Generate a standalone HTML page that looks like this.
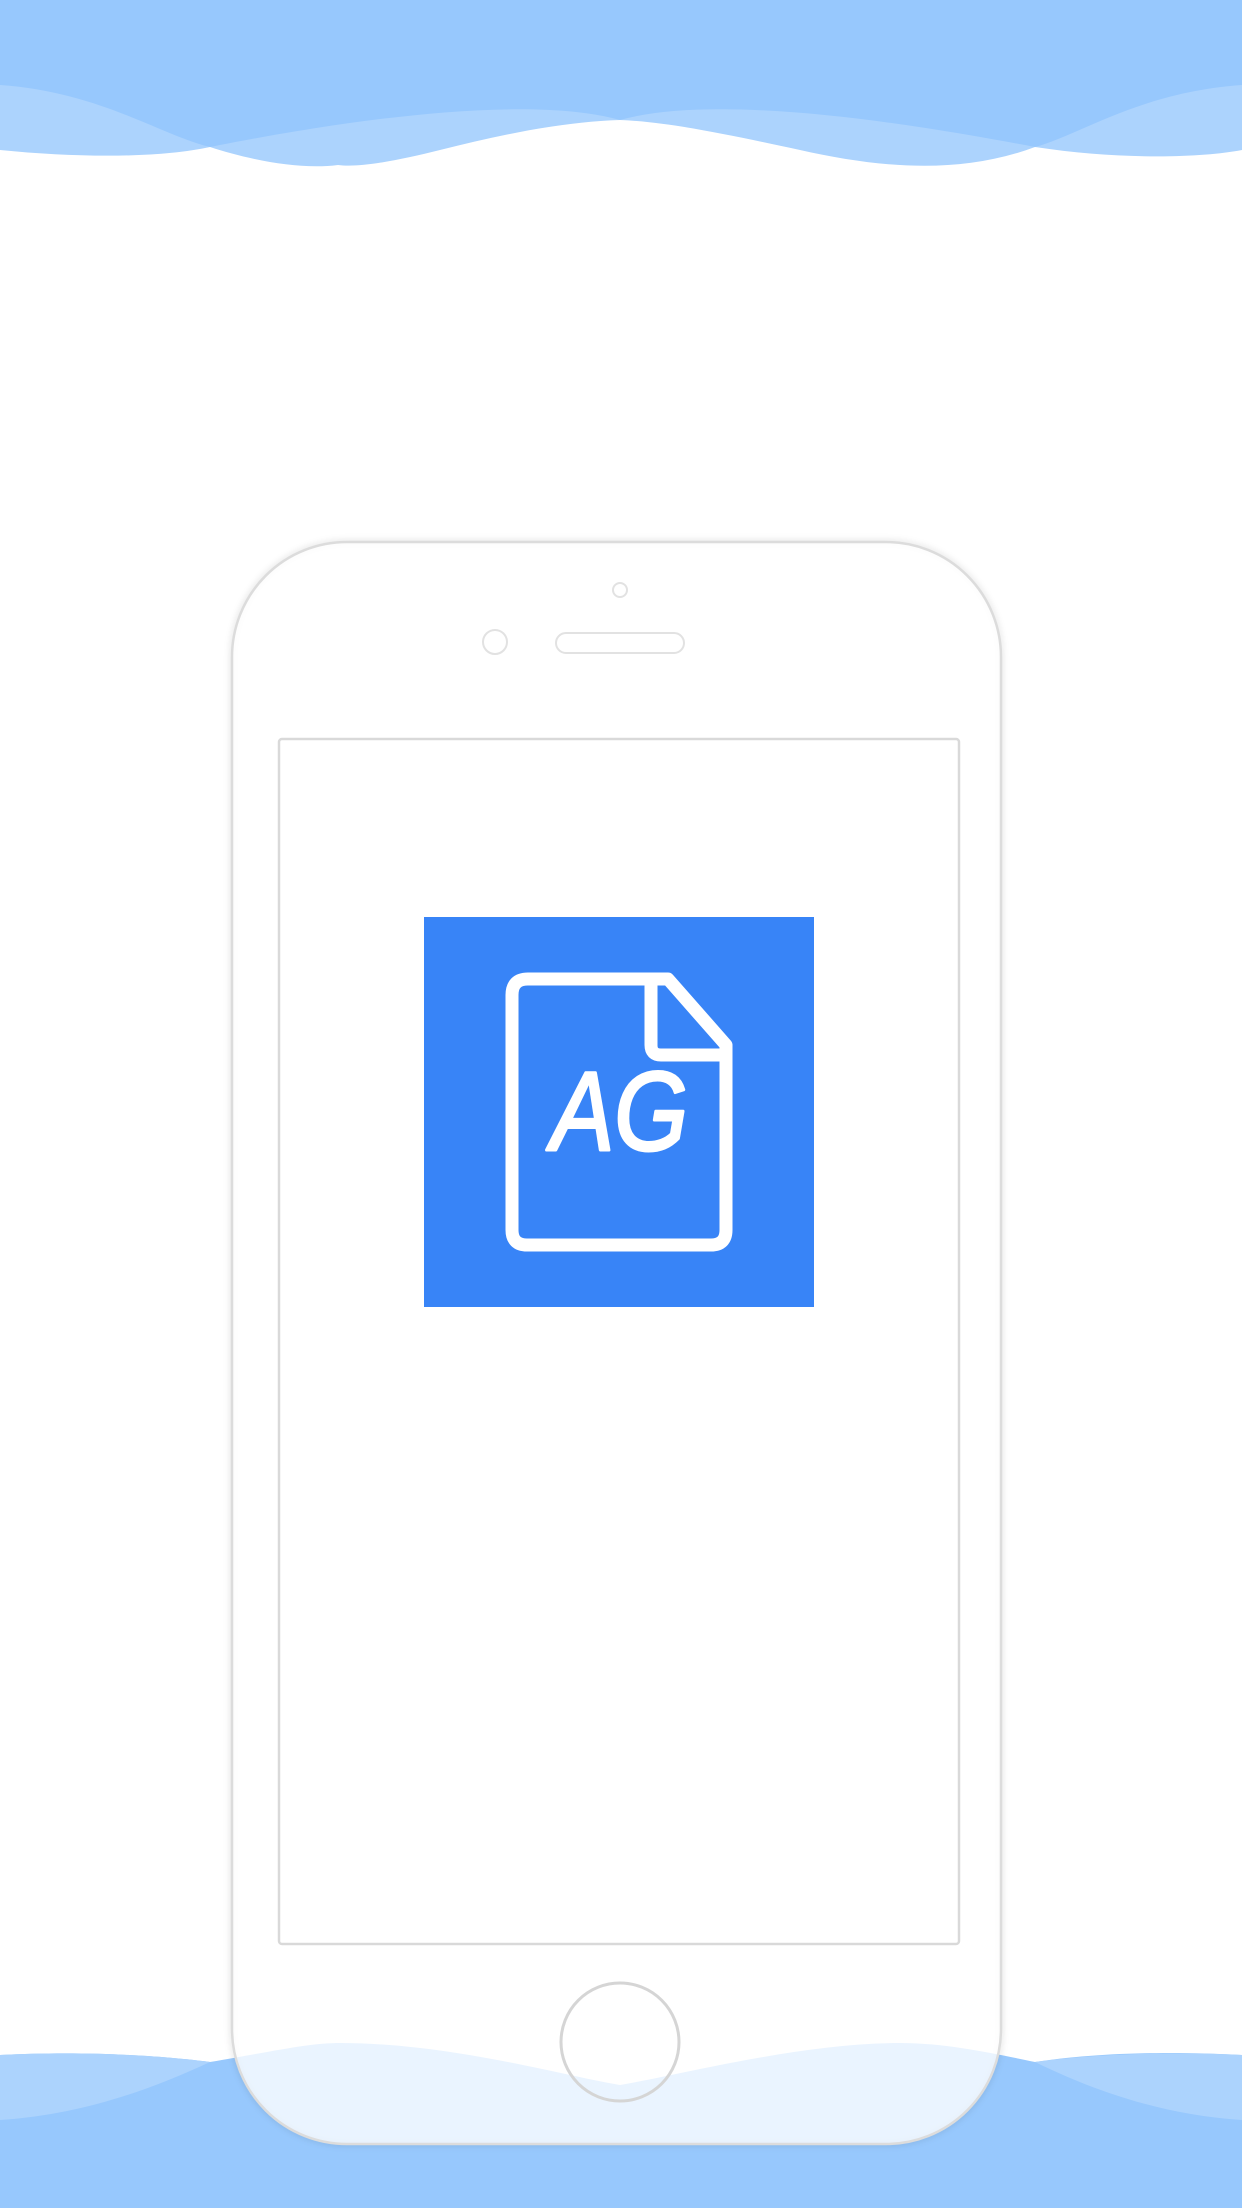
<!DOCTYPE html>
<html><head><meta charset="utf-8"><style>
html,body{margin:0;padding:0;background:#fff;}
body{width:1242px;height:2208px;position:relative;overflow:hidden;font-family:"Liberation Sans",sans-serif;}
svg{position:absolute;left:0;top:0;}
</style></head><body>
<svg width="1242" height="2208" viewBox="0 0 1242 2208">
<defs><filter id="sh" x="-10%" y="-10%" width="120%" height="120%"><feGaussianBlur stdDeviation="3"/></filter></defs>
<path d="M0,0 H1242 V150 C1200,158 1120,160 1035,147 C960,175 880,168 800,150 C730,135 670,122 620,120 C560,122 500,135 440,150 C400,160 360,168 338,165 C300,170 250,160 210,147 C160,158 80,158 0,150 Z" fill="#acd3fd"/>
<path d="M0,0 H1242 V85 C1140,92 1080,135 1035,147 C920,125 720,92 620,120 C520,92 320,125 210,147 C160,135 100,92 0,85 Z" fill="#97c8fd"/>
<path d="M0,2055 C100,2050 180,2058 210,2062 C280,2050 310,2043 340,2043 C450,2043 560,2075 620,2085 C680,2075 800,2043 900,2043 C950,2043 1000,2055 1035,2062 C1080,2055 1150,2050 1242,2055 V2208 H0 Z" fill="#97c8fd"/>
<path d="M0,2055 C100,2050 180,2058 210,2062 C150,2090 80,2115 0,2120 Z" fill="#acd3fd"/>
<path d="M1242,2055 C1142,2050 1062,2058 1035,2062 C1092,2090 1162,2115 1242,2120 Z" fill="#acd3fd"/>
<rect x="232" y="542" width="769" height="1602" rx="115" fill="none" stroke="#000" stroke-opacity="0.08" stroke-width="6" filter="url(#sh)"/>
<rect x="232" y="542" width="769" height="1602" rx="115" fill="#fff" fill-opacity="0.8" stroke="#dcdcdc" stroke-width="2.5"/>
<circle cx="620" cy="590" r="7" fill="none" stroke="#e2e2e2" stroke-width="2"/>
<circle cx="495" cy="642" r="12" fill="none" stroke="#e2e2e2" stroke-width="2"/>
<rect x="556" y="633" width="128" height="20" rx="10" fill="none" stroke="#e2e2e2" stroke-width="2"/>
<rect x="279" y="739" width="680" height="1205" rx="3" fill="#fff" stroke="#d9d9d9" stroke-width="2.5"/>
<circle cx="620" cy="2042" r="59" fill="none" stroke="#d5d5d5" stroke-width="3"/>
<rect x="424" y="917" width="390" height="390" fill="#3884f7"/>
<path d="M528,979 H668 L726,1045 V1230 Q726,1245 711,1245 H527 Q512,1245 512,1230 V995 Q512,979 528,979 Z" fill="none" stroke="#fff" stroke-width="13" stroke-linejoin="round"/>
<path d="M651,979 V1045 Q651,1055 661,1055 H726" fill="none" stroke="#fff" stroke-width="13" stroke-linejoin="round"/>
<text x="551" y="1150" fill="#fff" stroke="#fff" stroke-width="3" stroke-linejoin="round" font-family="Liberation Sans, sans-serif" font-style="italic" font-size="112" textLength="137" lengthAdjust="spacingAndGlyphs">AG</text>
</svg>
</body></html>
